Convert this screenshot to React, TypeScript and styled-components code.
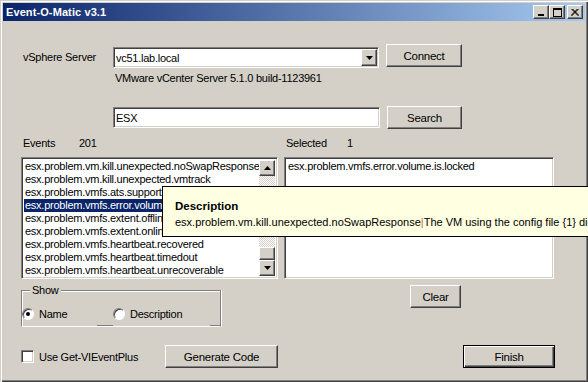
import React from 'react';
import styled, { createGlobalStyle, css } from 'styled-components';

const GlobalStyle = createGlobalStyle`
  html, body {
    margin: 0;
    padding: 0;
    background: #d4d0c8;
  }
  body {
    font-family: "Liberation Sans", Arial, sans-serif;
    font-size: 11px;
    letter-spacing: -0.25px;
    color: #000;
  }
`;

const raised = css`
  border: 1px solid;
  border-color: #fff #404040 #404040 #fff;
  box-shadow: inset -1px -1px 0 #808080, inset 1px 1px 0 #d4d0c8;
  background: #d4d0c8;
`;

const sunken = css`
  border: 1px solid;
  border-color: #808080 #fff #fff #808080;
  box-shadow: inset 1px 1px 0 #404040, inset -1px -1px 0 #d4d0c8;
  background: #fff;
`;

const Window = styled.div`
  position: relative;
  width: 588px;
  height: 382px;
  box-sizing: border-box;
  padding: 3px;
  background: #d4d0c8;
  overflow: hidden;
  box-shadow: inset 1px 1px 0 #d4d0c8, inset 2px 2px 0 #fff,
    inset -1px -1px 0 #404040, inset -2px -2px 0 #808080;
`;

const TitleBar = styled.div`
  height: 18px;
  display: flex;
  align-items: center;
  justify-content: space-between;
  padding: 0 2px 0 3px;
  background: linear-gradient(to right, #0a246a, #a6caf0);
`;

const TitleText = styled.span`
  color: #fff;
  font-weight: bold;
  font-size: 11px;
  letter-spacing: 0.1px;
`;

const CaptionButtons = styled.div`
  display: flex;
`;

const CaptionButton = styled.div<{ $gap?: number }>`
  ${raised};
  width: 16px;
  height: 14px;
  box-sizing: border-box;
  margin-left: ${(p) => p.$gap ?? 0}px;
  display: flex;
  align-items: center;
  justify-content: center;
`;

const Content = styled.div`
  display: flex;
  flex-direction: column;
  padding-left: 18px;
`;

const Row = styled.div<{ $top: number }>`
  display: flex;
  align-items: flex-start;
  margin-top: ${(p) => p.$top}px;
`;

const Label = styled.span<{ $w?: number; $pad?: number }>`
  width: ${(p) => (p.$w ? `${p.$w}px` : 'auto')};
  padding-left: ${(p) => p.$pad ?? 0}px;
  box-sizing: border-box;
  line-height: 13px;
  white-space: nowrap;
`;

const Field = styled.div<{ $w: number; $top?: number }>`
  ${sunken};
  position: relative;
  width: ${(p) => p.$w}px;
  height: 21px;
  margin-top: ${(p) => p.$top ?? 0}px;
  box-sizing: border-box;
  display: flex;
  align-items: center;
  padding-left: 2px;
  white-space: nowrap;
`;

const DropButton = styled.div`
  ${raised};
  position: absolute;
  right: 1px;
  top: 1px;
  width: 16px;
  height: 17px;
  box-sizing: border-box;
  display: flex;
  align-items: center;
  justify-content: center;
`;

const Button = styled.div<{ $w: number; $left?: number; $default?: boolean }>`
  ${raised};
  width: ${(p) => p.$w}px;
  height: 23px;
  margin-left: ${(p) => p.$left ?? 0}px;
  box-sizing: border-box;
  display: flex;
  align-items: center;
  justify-content: center;
  font-size: 11.5px;
  ${(p) =>
    p.$default &&
    css`
      border: 1px solid #000;
      box-shadow: inset 1px 1px 0 #fff, inset -1px -1px 0 #404040,
        inset -2px -2px 0 #808080;
    `}
`;

const Info = styled.div`
  margin-top: 4px;
  padding-left: 94px;
  line-height: 13px;
`;

const Columns = styled.div`
  display: grid;
  grid-template-columns: 257px 270px;
  column-gap: 6px;
  margin-top: 8px;
`;

const Counter = styled.div`
  display: flex;
  padding-left: 2px;
`;

const ListBox = styled.div`
  ${sunken};
  margin-top: 7px;
  height: 122px;
  box-sizing: border-box;
  padding: 2px;
  display: flex;
  overflow: hidden;
`;

const Items = styled.div`
  flex: 1;
  min-width: 0;
  overflow: hidden;
`;

const Item = styled.div<{ $selected?: boolean }>`
  height: 13px;
  line-height: 13px;
  padding-left: 1px;
  white-space: nowrap;
  overflow: hidden;
  ${(p) =>
    p.$selected &&
    css`
      background: #0a246a;
      color: #fff;
    `}
`;

const ScrollBar = styled.div`
  width: 16px;
  display: flex;
  flex-direction: column;
`;

const ScrollArrow = styled.div`
  ${raised};
  height: 16px;
  box-sizing: border-box;
  display: flex;
  align-items: center;
  justify-content: center;
`;

const Track = styled.div`
  flex: 1;
  display: flex;
  flex-direction: column;
  justify-content: flex-end;
  background: repeating-conic-gradient(#d4d0c8 0 25%, #fff 0 50%) 0 0 / 2px 2px;
`;

const Thumb = styled.div`
  ${raised};
  height: 13px;
  box-sizing: border-box;
`;

const Bottom = styled.div`
  display: grid;
  grid-template-columns: 257px 270px;
  column-gap: 6px;
  margin-top: 6px;
`;

const GroupBox = styled.div`
  position: relative;
  width: 200px;
  height: 37px;
  margin-top: 5px;
  box-sizing: border-box;
  border: 1px solid #808080;
  border-bottom-color: #fff;
  box-shadow: inset 1px 1px 0 #fff, 1px 0 0 #fff;
  background: linear-gradient(#808080, #808080) 75px 100% / 16px 1px no-repeat,
    linear-gradient(#808080, #808080) right 0 bottom 0 / 10px 1px no-repeat;
  display: flex;
  align-items: flex-end;
  padding: 0 0 6px 0;
`;

const Legend = styled.span`
  position: absolute;
  left: 8px;
  top: -7px;
  padding: 0 2px;
  background: #d4d0c8;
  line-height: 13px;
`;

const RadioOption = styled.div<{ $w: number }>`
  width: ${(p) => p.$w}px;
  display: flex;
  align-items: center;
  gap: 5px;
`;

const RadioCircle = styled.span<{ $checked?: boolean }>`
  width: 12px;
  height: 12px;
  box-sizing: border-box;
  border-radius: 50%;
  border: 1px solid;
  border-color: #808080 #fff #fff #808080;
  box-shadow: inset 1px 1px 0 #404040;
  background: #fff;
  display: flex;
  align-items: center;
  justify-content: center;
  &::after {
    content: '';
    width: 4px;
    height: 4px;
    border-radius: 50%;
    background: ${(p) => (p.$checked ? '#000' : 'transparent')};
  }
`;

const Footer = styled.div`
  display: flex;
  align-items: center;
  margin-top: 18px;
`;

const CheckOption = styled.div`
  display: flex;
  align-items: center;
  gap: 5px;
  width: 144px;
`;

const CheckBox = styled.span`
  ${sunken};
  width: 13px;
  height: 13px;
  box-sizing: border-box;
`;

const Tooltip = styled.div`
  position: absolute;
  left: 162px;
  top: 186px;
  width: 460px;
  height: 51px;
  box-sizing: border-box;
  background: #ffffe1;
  border: 1px solid #000;
  padding: 12px 0 0 12px;
  white-space: nowrap;
  font-size: 11px;
  letter-spacing: 0;
`;

const TipTitle = styled.div`
  font-weight: bold;
  font-size: 11.5px;
  line-height: 14px;
`;

const TipText = styled.div`
  margin-top: 2px;
  line-height: 14px;
`;

const Pipe = styled.span`
  color: #c87020;
`;

const Arrow = ({ down }: { down?: boolean }) => (
  <svg width="7" height="4" viewBox="0 0 7 4">
    <polygon points={down ? '0,0 7,0 3.5,4' : '0,4 7,4 3.5,0'} fill="#000" />
  </svg>
);

const events = [
  'esx.problem.vm.kill.unexpected.noSwapResponse',
  'esx.problem.vm.kill.unexpected.vmtrack',
  'esx.problem.vmfs.ats.support.lost',
  'esx.problem.vmfs.error.volume.is.locked',
  'esx.problem.vmfs.extent.offline',
  'esx.problem.vmfs.extent.online',
  'esx.problem.vmfs.heartbeat.recovered',
  'esx.problem.vmfs.heartbeat.timedout',
  'esx.problem.vmfs.heartbeat.unrecoverable',
];

export default function App() {
  return (
    <>
      <GlobalStyle />
      <Window>
        <TitleBar>
          <TitleText>Event-O-Matic v3.1</TitleText>
          <CaptionButtons>
            <CaptionButton>
              <svg width="8" height="8" viewBox="0 0 8 8">
                <rect x="1" y="6" width="6" height="2" fill="#000" />
              </svg>
            </CaptionButton>
            <CaptionButton>
              <svg width="9" height="9" viewBox="0 0 9 9">
                <rect x="0.5" y="0.5" width="8" height="8" fill="none" stroke="#000" />
                <rect x="0" y="0" width="9" height="2" fill="#000" />
              </svg>
            </CaptionButton>
            <CaptionButton $gap={2}>
              <svg width="8" height="7" viewBox="0 0 8 7">
                <path d="M0.5 0 L7.5 7 M1.5 0 L8 6.5 M7.5 0 L0.5 7 M6.5 0 L0 6.5" stroke="#000" strokeWidth="1" />
              </svg>
            </CaptionButton>
          </CaptionButtons>
        </TitleBar>

        <Content>
          <Row $top={23}>
            <Label $w={92} $pad={2} style={{ marginTop: 7 }}>
              vSphere Server
            </Label>
            <Field $w={266} $top={3}>
              vc51.lab.local
              <DropButton>
                <Arrow down />
              </DropButton>
            </Field>
            <Button $w={76} $left={7}>
              Connect
            </Button>
          </Row>
          <Info>VMware vCenter Server 5.1.0 build-1123961</Info>

          <Row $top={21}>
            <Field $w={267} $top={1} style={{ marginLeft: 92 }}>
              ESX
            </Field>
            <Button $w={75} $left={7}>
              Search
            </Button>
          </Row>

          <Columns>
            <Counter>
              <Label $w={56}>Events</Label>
              <Label>201</Label>
            </Counter>
            <Counter>
              <Label $w={61}>Selected</Label>
              <Label>1</Label>
            </Counter>
            <ListBox>
              <Items>
                {events.map((e, i) => (
                  <Item key={e} $selected={i === 3}>
                    {e}
                  </Item>
                ))}
              </Items>
              <ScrollBar>
                <ScrollArrow>
                  <Arrow />
                </ScrollArrow>
                <Track>
                  <Thumb />
                </Track>
                <ScrollArrow>
                  <Arrow down />
                </ScrollArrow>
              </ScrollBar>
            </ListBox>
            <ListBox>
              <Items>
                <Item>esx.problem.vmfs.error.volume.is.locked</Item>
              </Items>
            </ListBox>
          </Columns>

          <Bottom>
            <GroupBox>
              <Legend>Show</Legend>
              <RadioOption $w={91}>
                <RadioCircle $checked />
                Name
              </RadioOption>
              <RadioOption $w={100}>
                <RadioCircle />
                Description
              </RadioOption>
            </GroupBox>
            <div>
              <Button $w={51} $left={126}>
                Clear
              </Button>
            </div>
          </Bottom>

          <Footer>
            <CheckOption>
              <CheckBox />
              Use Get-VIEventPlus
            </CheckOption>
            <Button $w={113}>Generate Code</Button>
            <Button $w={92} $default style={{ marginLeft: 185 }}>
              Finish
            </Button>
          </Footer>
        </Content>

        <Tooltip>
          <TipTitle>Description</TipTitle>
          <TipText>
            esx.problem.vm.kill.unexpected.noSwapResponse<Pipe>|</Pipe>The VM using the config file {'{1}'} did not respond
          </TipText>
        </Tooltip>
      </Window>
    </>
  );
}
